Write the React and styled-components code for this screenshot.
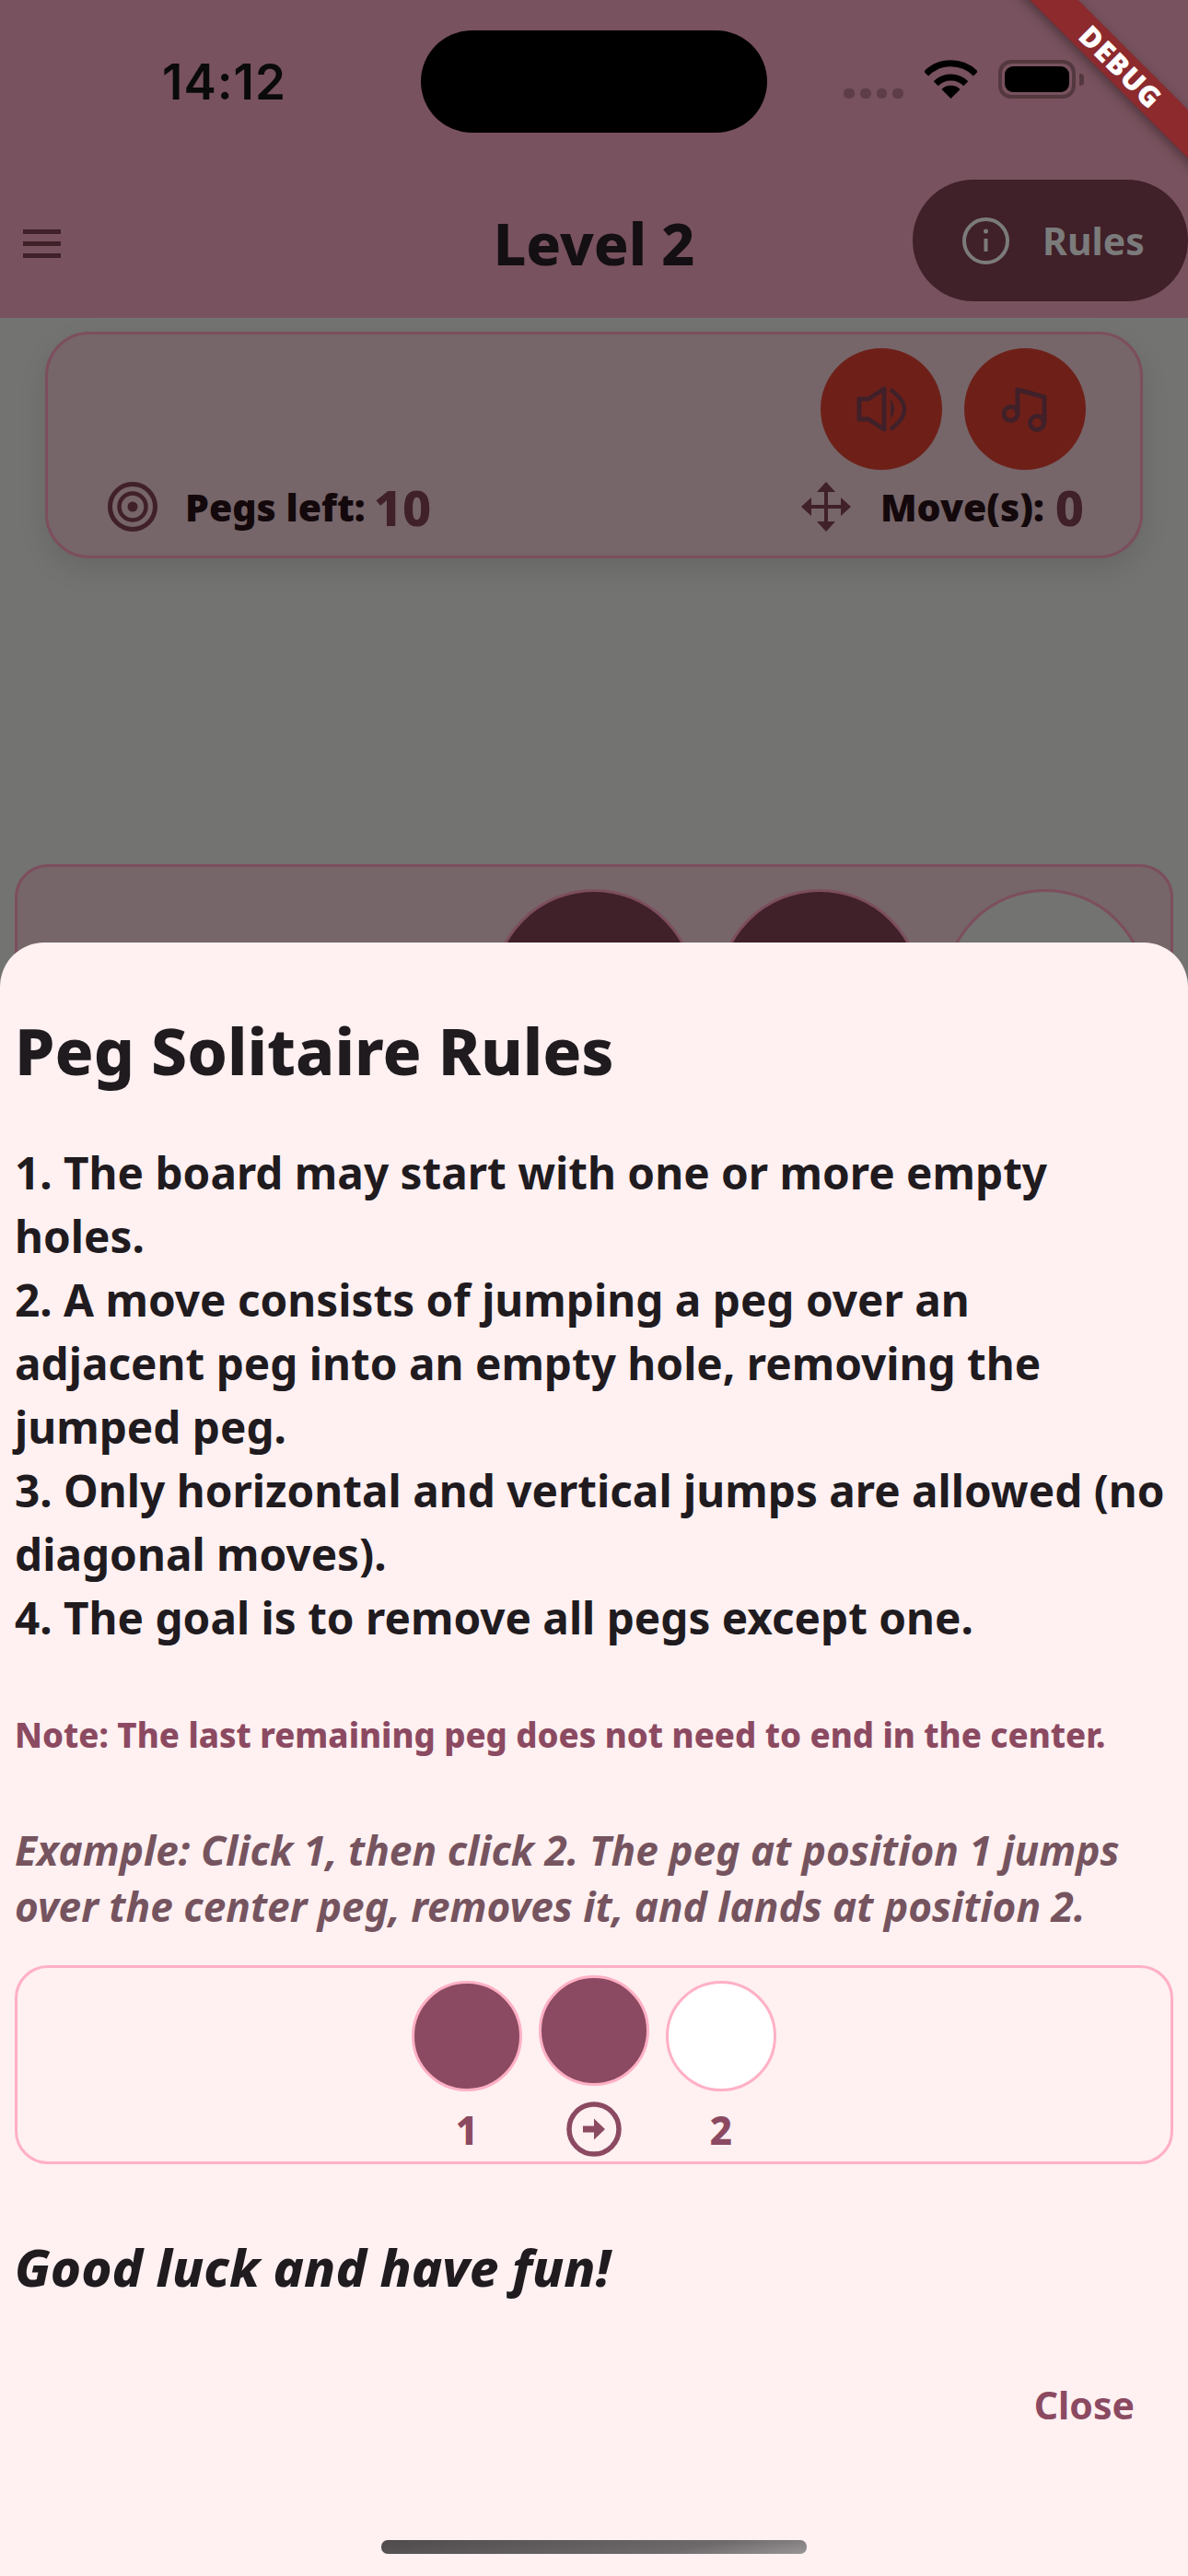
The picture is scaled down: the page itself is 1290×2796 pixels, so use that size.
import React from "react";
import styled, { createGlobalStyle } from "styled-components";

const FONT = `"Noto Sans", "Lato", sans-serif`;

const Global = createGlobalStyle`
  html, body { margin: 0; padding: 0; background: #737371; }
  * { box-sizing: border-box; }
`;

const Screen = styled.div`
  position: relative;
  width: 1290px;
  height: 2796px;
  overflow: hidden;
  background: #737371;
  font-family: ${FONT};
`;

const AppBar = styled.header`
  height: 345px;
  background: #78525e;
  padding-top: 33px;
`;

const StatusBar = styled.div`
  display: grid;
  grid-template-columns: 457px 376px 1fr;
  height: 111px;
`;

const Time = styled.div`
  padding: 27px 0 0 176px;
  font-family: "Inter", sans-serif;
  font-size: 53px;
  line-height: 58px;
  font-weight: 600;
  letter-spacing: 1px;
  color: #0a0a0a;
`;

const Island = styled.div`
  background: #000;
  border-radius: 56px;
`;

const StatusIcons = styled.div`
  display: flex;
  align-items: flex-end;
  gap: 23px;
  padding: 0 0 37px 83px;
`;

const Signal = styled.div`
  display: flex;
  gap: 6px;
  width: 65px;
`;

const SignalDot = styled.span`
  width: 12px;
  height: 11px;
  border-radius: 5px;
  background: #5d3d48;
`;

const BatteryWrap = styled.div`
  display: flex;
  align-items: center;
  gap: 4px;
`;

const Battery = styled.div`
  width: 84px;
  height: 42px;
  border: 4px solid #54383f;
  border-radius: 14px;
  padding: 3px;
`;

const BatteryFill = styled.div`
  width: 100%;
  height: 100%;
  background: #000;
  border-radius: 9px;
`;

const BatteryNub = styled.div`
  width: 5px;
  height: 13px;
  background: #54383f;
  border-radius: 0 4px 4px 0;
`;

const Toolbar = styled.div`
  display: grid;
  grid-template-columns: 1fr auto 1fr;
  align-items: center;
  height: 132px;
  margin-top: 51px;
`;

const Burger = styled.div`
  display: flex;
  flex-direction: column;
  gap: 8px;
  width: 41px;
  margin: 6px 0 0 25px;
`;

const BurgerBar = styled.span`
  height: 5px;
  background: #402029;
`;

const Title = styled.h1`
  margin: 6px 0 0;
  font-size: 62.5px;
  line-height: 80px;
  font-weight: 800;
  color: #140f12;
`;

const RulesButton = styled.div`
  justify-self: end;
  display: flex;
  align-items: center;
  gap: 36px;
  width: 299px;
  height: 132px;
  padding-left: 54px;
  border-radius: 66px;
  background: #402029;
  font-size: 41px;
  font-weight: 700;
  color: #7b7b7b;
`;

const Main = styled.main`
  display: flex;
  flex-direction: column;
`;

const InfoCard = styled.section`
  margin: 15px 49px 0;
  height: 246px;
  border: 3px solid #7c4e5e;
  border-radius: 48px;
  background: #766569;
  box-shadow: 0 12px 30px rgba(0, 0, 0, 0.1);
  padding: 15px 61px 0 65px;
  display: flex;
  flex-direction: column;
  gap: 13px;
`;

const SoundRow = styled.div`
  display: flex;
  justify-content: flex-end;
  gap: 24px;
  margin-right: -2px;
`;

const RoundButton = styled.div`
  width: 132px;
  height: 132px;
  border-radius: 50%;
  background: #6e2018;
  display: flex;
  align-items: center;
  justify-content: center;
`;

const StatsRow = styled.div`
  display: flex;
  justify-content: space-between;
  align-items: center;
  height: 54px;
`;

const Stat = styled.div`
  display: flex;
  align-items: center;
`;

const StatLabel = styled.span`
  margin-left: ${(p) => p.$gap}px;
  font-size: 41px;
  font-weight: 900;
  color: #13080b;
`;

const StatValue = styled.span`
  margin-left: ${(p) => p.$gap}px;
  font-size: 54px;
  font-weight: 800;
  color: #402029;
`;

const Board = styled.section`
  margin: 332px 16px 0;
  height: 600px;
  border: 3px solid #7c4e5e;
  border-radius: 36px;
  background: #766569;
  padding: 24px 25px 0 0;
  display: flex;
  justify-content: flex-end;
  gap: 23px;
`;

const BoardPeg = styled.div`
  width: 222px;
  height: 222px;
  border-radius: 50%;
  border: 3px solid #7c4e5e;
  background: ${(p) => (p.$empty ? "#737371" : "#402029")};
`;

const Sheet = styled.section`
  position: absolute;
  top: 1023px;
  left: 0;
  right: 0;
  bottom: 0;
  background: #fff0f1;
  border-radius: 48px 48px 0 0;
  padding: 73px 16px 0;
  color: #1f1b1f;
`;

const SheetTitle = styled.h2`
  margin: 0;
  font-size: 69.5px;
  line-height: 88px;
  font-weight: 800;
`;

const Rules = styled.div`
  margin-top: 54px;
  font-size: 47.7px;
  line-height: 69px;
  font-weight: 700;
`;

const Line = styled.div`
  white-space: nowrap;
`;

const Note = styled.p`
  margin: 68px 0 0;
  font-size: 36.5px;
  line-height: 50px;
  font-weight: 800;
  color: #8b4a61;
  white-space: nowrap;
`;

const Example = styled.div`
  margin-top: 70px;
  font-size: 44.2px;
  line-height: 61px;
  font-weight: 700;
  font-style: italic;
  color: #75545f;
`;

const DemoBox = styled.div`
  margin-top: 33px;
  height: 216px;
  border: 3px solid #ffb0c5;
  border-radius: 36px;
  background: #fff0f1;
  display: flex;
  justify-content: center;
  gap: 18px;
  padding-top: 14px;
`;

const DemoColumn = styled.div`
  width: 120px;
  display: flex;
  flex-direction: column;
  align-items: center;
`;

const DemoPeg = styled.div`
  width: 120px;
  height: 120px;
  flex: none;
  border-radius: 50%;
  border: 3px solid #ffb0c5;
  background: ${(p) => (p.$empty ? "#ffffff" : "#8b4a61")};
  margin-top: ${(p) => (p.$lifted ? "-6px" : "0")};
  margin-bottom: ${(p) => (p.$lifted ? "17px" : "0")};
`;

const DemoLabel = styled.div`
  margin-top: 16px;
  font-size: 42px;
  line-height: 52px;
  font-weight: 800;
  color: #8b4a61;
`;

const Luck = styled.p`
  margin: 76px 0 0;
  font-size: 56px;
  line-height: 70px;
  font-weight: 800;
  font-style: italic;
`;

const CloseRow = styled.div`
  margin: 85px 42px 0 0;
  text-align: right;
  font-size: 41px;
  line-height: 60px;
  font-weight: 700;
  color: #8b4a61;
`;

const HomeIndicator = styled.div`
  position: absolute;
  left: 414px;
  top: 1734px;
  width: 462px;
  height: 15px;
  border-radius: 7px;
  background: linear-gradient(170deg, #4f4b4c 0%, #6e6a6b 70%, #999596 100%);
`;

const DebugBanner = styled.div`
  position: absolute;
  left: 1017px;
  top: 54px;
  width: 400px;
  height: 37px;
  transform: rotate(45deg);
  background: #8c2a2e;
  box-shadow: 0 4px 12px rgba(0, 0, 0, 0.35);
  color: #fff;
  font-family: "Noto Sans", sans-serif;
  font-weight: 900;
  font-size: 31px;
  line-height: 37px;
  letter-spacing: 1px;
  text-align: center;
`;

const WifiIcon = () => (
  <svg width="57" height="42" viewBox="0 0 57 42" fill="none">
    <path d="M1.6 15A38 38 0 0 1 55.4 15" stroke="#000" strokeWidth="7" />
    <path d="M12.2 25.7A23 23 0 0 1 44.8 25.7" stroke="#000" strokeWidth="7" />
    <path d="M28.5 42L18.5 32A14 14 0 0 1 38.5 32Z" fill="#000" />
  </svg>
);

const InfoIcon = () => (
  <svg width="51" height="51" viewBox="0 0 51 51" fill="none" stroke="#7b7b7b">
    <circle cx="25.5" cy="25.5" r="23.5" strokeWidth="4" />
    <path d="M25.5 23V37" strokeWidth="4" />
    <circle cx="25.5" cy="15" r="2.5" fill="#7b7b7b" stroke="none" />
  </svg>
);

const SpeakerIcon = () => (
  <svg width="72" height="72" viewBox="0 0 72 72" fill="none" stroke="#402029">
    <path d="M12 25H22L39 14V58L22 47H12Z" strokeWidth="5" strokeLinejoin="round" />
    <path d="M46 15Q76 36.5 46 58" strokeWidth="4.5" />
    <path d="M46 25Q54 36 46 47Z" fill="#402029" stroke="none" />
  </svg>
);

const MusicIcon = () => (
  <svg width="72" height="72" viewBox="0 0 72 72" fill="none" stroke="#402029" strokeWidth="5" strokeLinejoin="round">
    <path d="M28 41V15L57 23V51" />
    <circle cx="20.5" cy="41" r="7.5" />
    <circle cx="49" cy="51" r="7.5" />
  </svg>
);

const TargetIcon = () => (
  <svg width="54" height="54" viewBox="0 0 54 54" fill="none" stroke="#402029">
    <circle cx="27" cy="27" r="24.5" strokeWidth="5" />
    <circle cx="27" cy="27" r="14.5" strokeWidth="4.5" />
    <circle cx="27" cy="27" r="5.5" fill="#402029" stroke="none" />
  </svg>
);

const MoveIcon = () => (
  <svg width="54" height="54" viewBox="0 0 54 54" fill="#402029">
    <path d="M25 8h4v38h-4z" />
    <path d="M8 25h38v4H8z" />
    <path d="M27 0L37 11H17Z" />
    <path d="M27 54L37 43H17Z" />
    <path d="M0 27L11 17V37Z" />
    <path d="M54 27L43 17V37Z" />
  </svg>
);

const ArrowCircleIcon = () => (
  <svg width="60" height="60" viewBox="0 0 60 60" fill="none">
    <circle cx="30" cy="30" r="27" stroke="#8b4a61" strokeWidth="5.5" />
    <path d="M18 26.5H30V18.5L42 30L30 41.5V33.5H18Z" fill="#8b4a61" />
  </svg>
);

const ruleLines = [
  "1. The board may start with one or more empty",
  "holes.",
  "2. A move consists of jumping a peg over an",
  "adjacent peg into an empty hole, removing the",
  "jumped peg.",
  "3. Only horizontal and vertical jumps are allowed (no",
  "diagonal moves).",
  "4. The goal is to remove all pegs except one.",
];

const exampleLines = [
  "Example: Click 1, then click 2. The peg at position 1 jumps",
  "over the center peg, removes it, and lands at position 2.",
];

export default function App() {
  return (
    <Screen>
      <Global />
      <AppBar>
        <StatusBar>
          <Time>14:12</Time>
          <Island />
          <StatusIcons>
            <Signal>
              {[0, 1, 2, 3].map((i) => (
                <SignalDot key={i} />
              ))}
            </Signal>
            <WifiIcon />
            <BatteryWrap>
              <Battery>
                <BatteryFill />
              </Battery>
              <BatteryNub />
            </BatteryWrap>
          </StatusIcons>
        </StatusBar>
        <Toolbar>
          <Burger>
            <BurgerBar />
            <BurgerBar />
            <BurgerBar />
          </Burger>
          <Title>Level 2</Title>
          <RulesButton>
            <InfoIcon />
            Rules
          </RulesButton>
        </Toolbar>
      </AppBar>
      <Main>
        <InfoCard>
          <SoundRow>
            <RoundButton>
              <SpeakerIcon />
            </RoundButton>
            <RoundButton>
              <MusicIcon />
            </RoundButton>
          </SoundRow>
          <StatsRow>
            <Stat>
              <TargetIcon />
              <StatLabel $gap={30}>Pegs left:</StatLabel>
              <StatValue $gap={9}>10</StatValue>
            </Stat>
            <Stat>
              <MoveIcon />
              <StatLabel $gap={32}>Move(s):</StatLabel>
              <StatValue $gap={12}>0</StatValue>
            </Stat>
          </StatsRow>
        </InfoCard>
        <Board>
          <BoardPeg />
          <BoardPeg />
          <BoardPeg $empty />
        </Board>
      </Main>
      <Sheet>
        <SheetTitle>Peg Solitaire Rules</SheetTitle>
        <Rules>
          {ruleLines.map((l) => (
            <Line key={l}>{l}</Line>
          ))}
        </Rules>
        <Note>Note: The last remaining peg does not need to end in the center.</Note>
        <Example>
          {exampleLines.map((l) => (
            <Line key={l}>{l}</Line>
          ))}
        </Example>
        <DemoBox>
          <DemoColumn>
            <DemoPeg />
            <DemoLabel>1</DemoLabel>
          </DemoColumn>
          <DemoColumn>
            <DemoPeg $lifted />
            <ArrowCircleIcon />
          </DemoColumn>
          <DemoColumn>
            <DemoPeg $empty />
            <DemoLabel>2</DemoLabel>
          </DemoColumn>
        </DemoBox>
        <Luck>Good luck and have fun!</Luck>
        <CloseRow>Close</CloseRow>
        <HomeIndicator />
      </Sheet>
      <DebugBanner>DEBUG</DebugBanner>
    </Screen>
  );
}
